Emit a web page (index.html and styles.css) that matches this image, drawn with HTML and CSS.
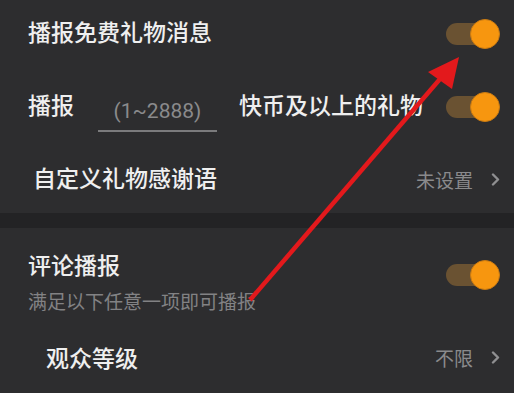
FILE: index.html
```html
<!DOCTYPE html>
<html lang="zh-CN">
  <head>
    <meta charset="UTF-8" />
    <meta name="viewport" content="width=device-width, initial-scale=1.0" />
    <title>礼物播报设置</title>
    <link rel="stylesheet" href="styles.css">
  </head>
  <body>
    <div class="page">
      <div class="section">
        <div class="row row-free">
          <span class="title">播报免费礼物消息</span>
          <div class="switch on"><span class="track"></span><span class="knob"></span></div>
        </div>
        <div class="row row-limit">
          <span class="title">播报</span>
          <div class="field"><span class="hint">(1~2888)</span></div>
          <span class="title after">快币及以上的礼物</span>
          <div class="switch on"><span class="track"></span><span class="knob"></span></div>
        </div>
        <div class="row row-thanks">
          <span class="title thanks">自定义礼物感谢语</span>
          <div class="value">未设置<svg class="arrow" width="9" height="13" viewBox="0 0 9 13"><polyline points="2,1.5 7,6.5 2,11.5" /></svg></div>
        </div>
      </div>
      <div class="gap"></div>
      <div class="section">
        <div class="row row-comment">
          <div class="text">
            <div class="title">评论播报</div>
            <div class="sub">满足以下任意一项即可播报</div>
          </div>
          <div class="switch on"><span class="track"></span><span class="knob"></span></div>
        </div>
        <div class="row row-level">
          <span class="title">观众等级</span>
          <div class="value">不限<svg class="arrow" width="9" height="13" viewBox="0 0 9 13"><polyline points="2,1.5 7,6.5 2,11.5" /></svg></div>
        </div>
      </div>
      <!-- 标注箭头 -->
      <svg class="mark" width="514" height="393" viewBox="0 0 514 393">
        <line x1="250" y1="300" x2="446" y2="72" />
        <polygon points="459,57 428,72 452,89" />
      </svg>
    </div>
  </body>
</html>
```

FILE: styles.css
```css
* {
  padding: 0;
  margin: 0;
  box-sizing: border-box;
}
html,
body {
  width: 100%;
  height: 100%;
  overflow: hidden;
}
body {
  background: #2d2d2f;
  color: #efefef;
  font-family: "Noto Sans CJK SC", "Noto Sans", sans-serif;
}
.page {
  position: relative;
  width: 514px;
  height: 393px;
}
.row {
  display: flex;
  align-items: center;
  padding: 0 14px 0 28px;
}
.title {
  font-size: 23px;
  font-weight: 500;
  line-height: 30px;
  white-space: nowrap;
}
.section .row-free .title,
.section .row-limit .title,
.section .row-thanks .title {
  padding-bottom: 6px;
}
.row-free {
  height: 68px;
}
.row-limit {
  height: 78px;
}
.row-thanks {
  height: 67px;
}
.thanks {
  margin-left: 5px;
}
.field {
  width: 119px;
  height: 36px;
  margin-left: 24px;
  margin-top: 14px;
  border-bottom: 2px solid #7b7b7d;
  text-align: center;
}
.hint {
  font-family: "Roboto", "Noto Sans", sans-serif;
  font-size: 21px;
  line-height: 30px;
  color: #8a8a8c;
}
.after {
  margin-left: 22px;
}
.switch {
  position: relative;
  width: 54px;
  height: 30px;
  margin-left: auto;
  flex-shrink: 0;
}
.switch .track {
  position: absolute;
  left: 0;
  top: 4px;
  width: 48px;
  height: 22px;
  border-radius: 11px;
  background: #6a5232;
}
.switch .knob {
  position: absolute;
  right: 0;
  top: 0;
  width: 30px;
  height: 30px;
  border-radius: 50%;
  background: #f7960f;
  border: 1px solid #c97a12;
}
.value {
  margin-left: auto;
  display: flex;
  align-items: center;
  font-size: 19px;
  color: #8a8a8c;
}
.arrow {
  margin-left: 18px;
}
.arrow polyline {
  fill: none;
  stroke: #8f8f91;
  stroke-width: 2.4;
  stroke-linecap: round;
  stroke-linejoin: round;
}
.gap {
  height: 15px;
  background: #232325;
}
.row-comment {
  align-items: flex-start;
  padding-top: 21px;
  height: 94px;
}
.row-comment .switch {
  margin-top: 11px;
}
.sub {
  margin-top: 10px;
  font-size: 19px;
  line-height: 24px;
  color: #828284;
  white-space: nowrap;
}
.row-level {
  height: 70px;
  padding-left: 46px;
}
.mark {
  position: absolute;
  left: 0;
  top: 0;
}
.mark line {
  stroke: #e3191c;
  stroke-width: 4.5;
}
.mark polygon {
  fill: #e3191c;
}
```
